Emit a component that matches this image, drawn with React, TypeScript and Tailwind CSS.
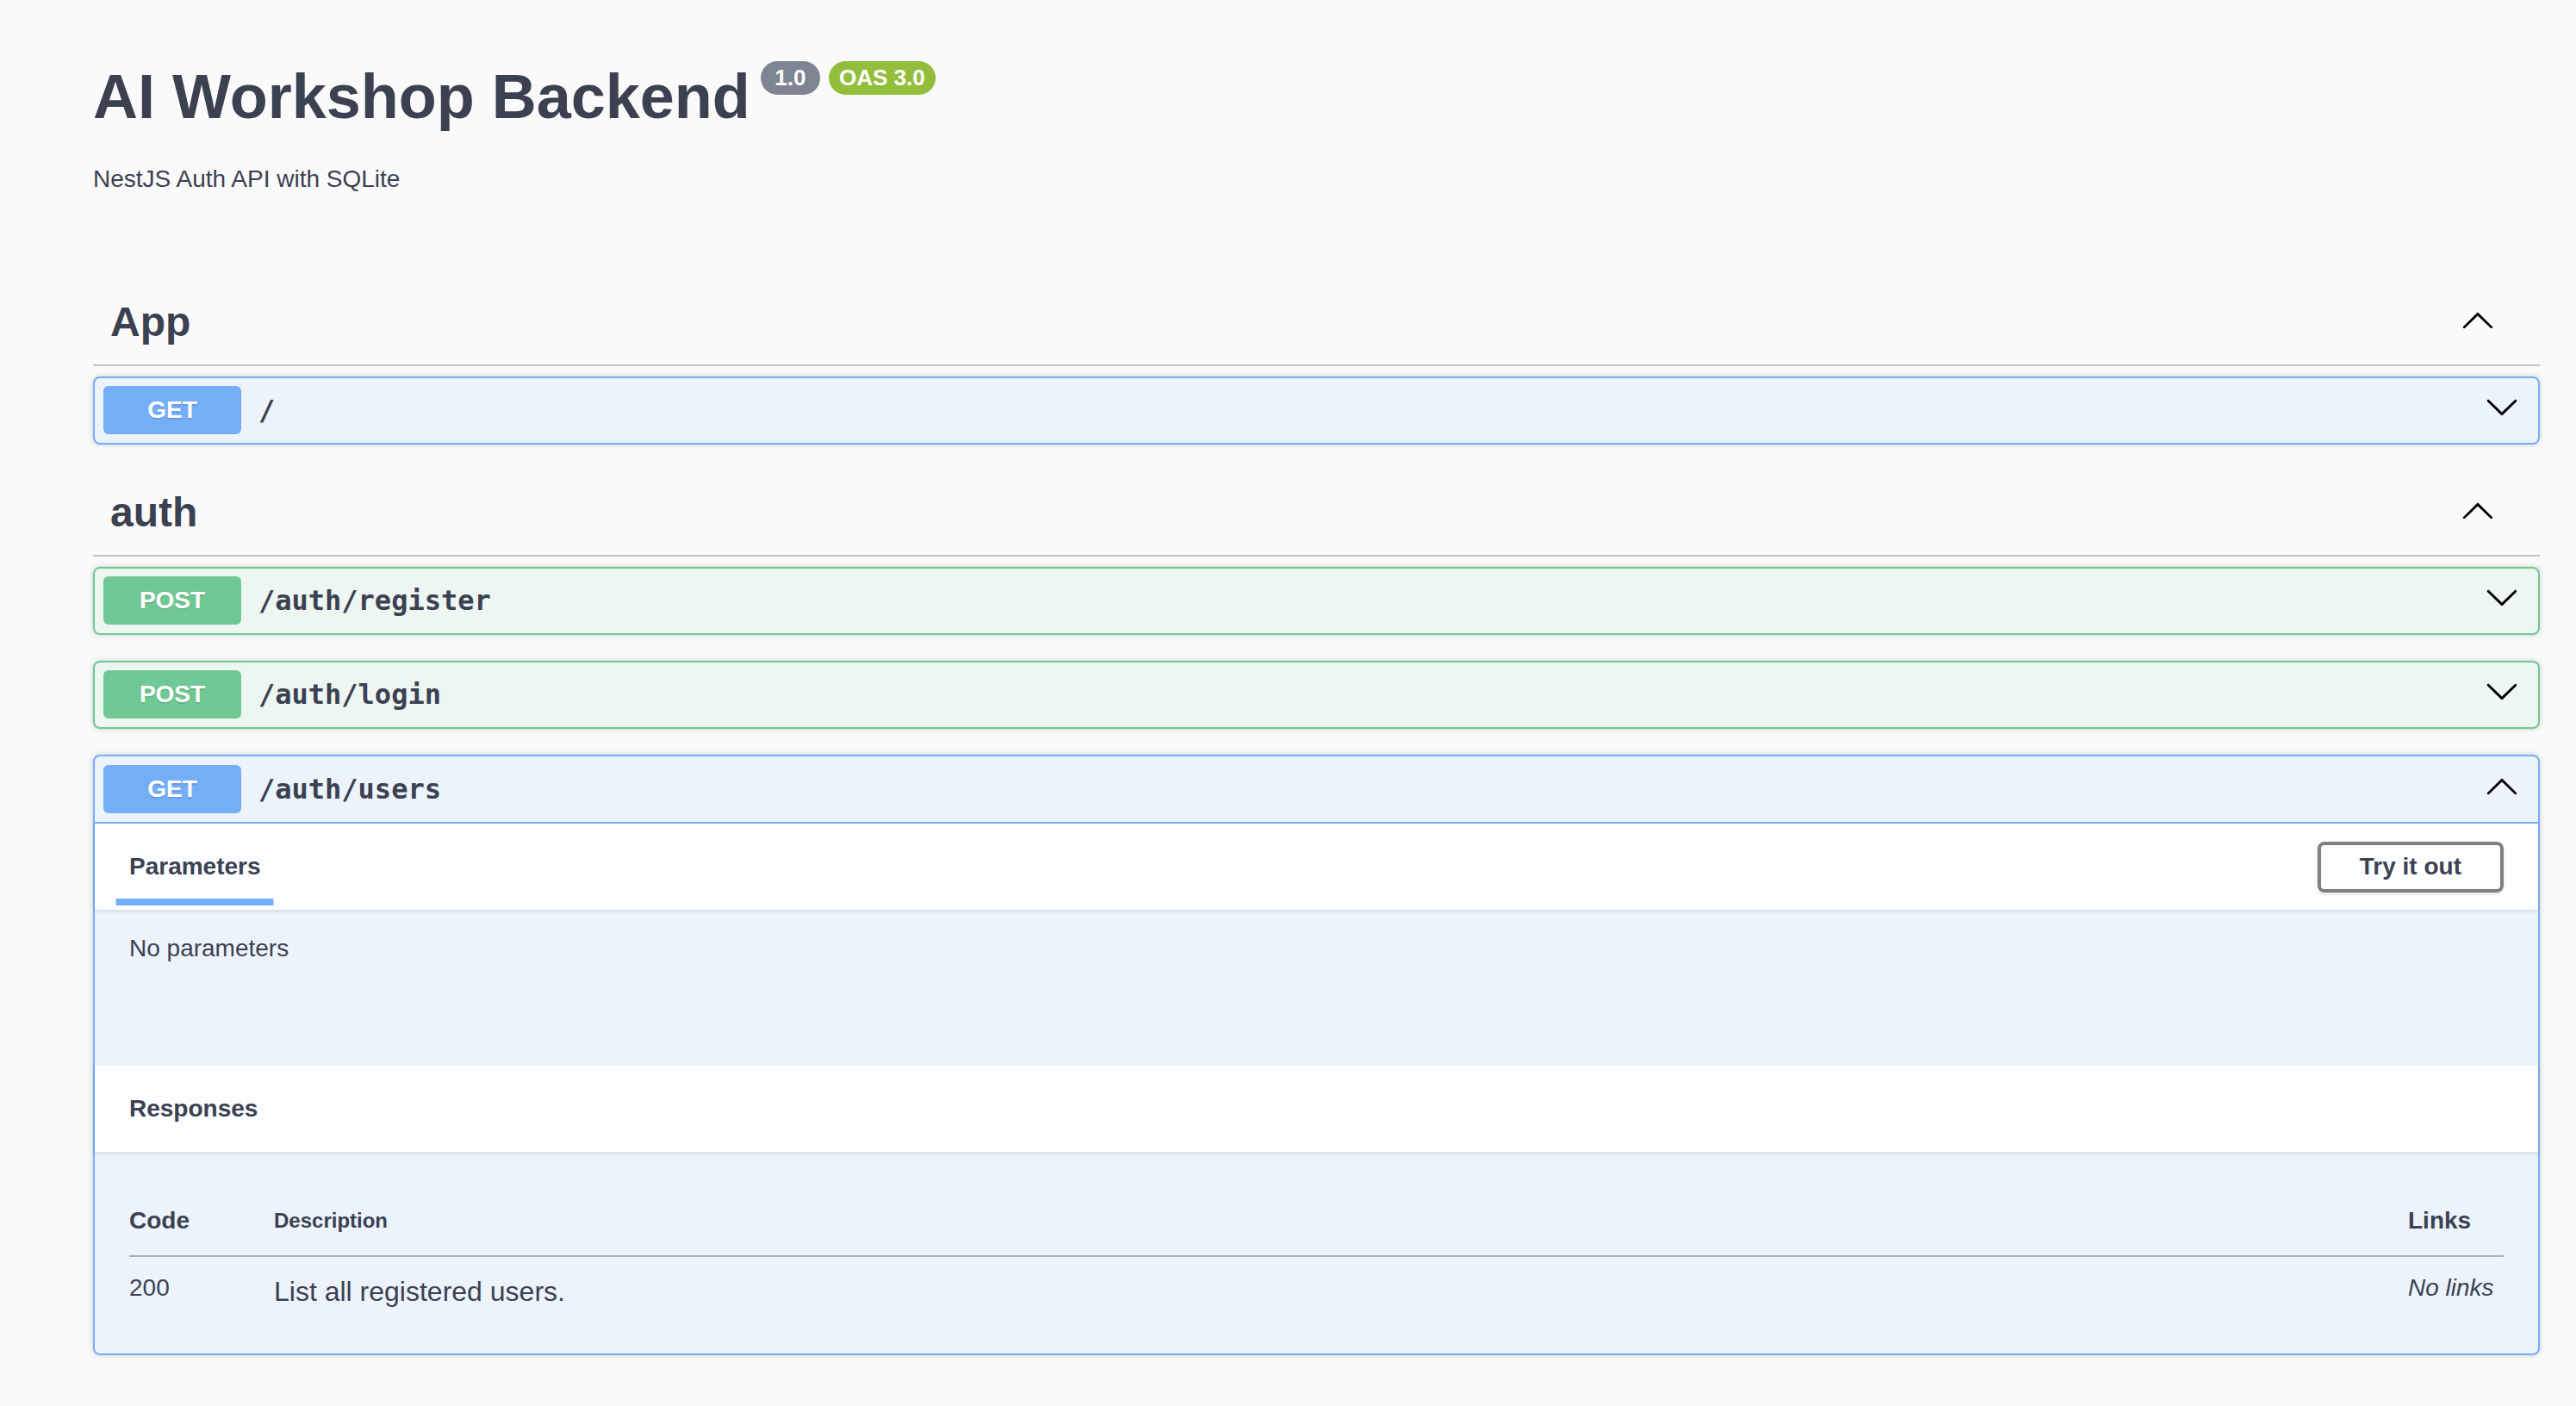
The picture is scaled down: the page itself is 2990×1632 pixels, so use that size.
import React from 'react';

const sans = '[font-family:"Liberation_Sans",Arial,sans-serif]';
const mono = '[font-family:"DejaVu_Sans_Mono",monospace]';

type Method = 'GET' | 'POST';

interface Operation {
  method: Method;
  path: string;
  open?: boolean;
}

interface Tag {
  name: string;
  operations: Operation[];
}

const tags: Tag[] = [
  { name: 'App', operations: [{ method: 'GET', path: '/' }] },
  {
    name: 'auth',
    operations: [
      { method: 'POST', path: '/auth/register' },
      { method: 'POST', path: '/auth/login' },
      { method: 'GET', path: '/auth/users', open: true },
    ],
  },
];

const methodStyles: Record<Method, { block: string; badge: string; line: string; tab: string }> = {
  GET: {
    block: 'border-[#74aef7] bg-[#ecf3fb]',
    badge: 'bg-[#74aef7]',
    line: 'border-[#74aef7]',
    tab: 'bg-[#74aef7]',
  },
  POST: {
    block: 'border-[#70c894] bg-[#edf6f1]',
    badge: 'bg-[#70c894]',
    line: 'border-[#70c894]',
    tab: 'bg-[#70c894]',
  },
};

function ArrowUp({ className }: { className?: string }) {
  return (
    <svg viewBox="0 0 20 20" className={className} fill="currentColor">
      <path d="M 17.418 14.908 C 17.69 15.176 18.127 15.176 18.397 14.908 C 18.667 14.64 18.668 14.207 18.397 13.939 L 10.489 6.109 C 10.219 5.841 9.782 5.841 9.51 6.109 L 1.602 13.939 C 1.332 14.207 1.332 14.64 1.602 14.908 C 1.873 15.176 2.311 15.176 2.581 14.908 L 10 7.767 L 17.418 14.908 Z" />
    </svg>
  );
}

function ArrowDown({ className }: { className?: string }) {
  return (
    <svg viewBox="0 0 20 20" className={className} fill="currentColor">
      <path d="M17.418 6.109c.272-.268.709-.268.979 0s.271.701 0 .969l-7.908 7.83c-.27.268-.707.268-.979 0l-7.908-7.830c-.27-.268-.27-.701 0-.969.271-.268.709-.268.979 0L10 13.25l7.418-7.141z" />
    </svg>
  );
}

function OpenBody({ method }: { method: Method }) {
  const s = methodStyles[method];
  return (
    <div>
      <div className="flex items-center justify-between h-[100px] px-[40px] bg-[#fcfdfe] shadow-[0_2px_4px_rgba(0,0,0,0.1)]">
        <div className="relative">
          <span className="text-[28px] leading-[32px] font-bold">Parameters</span>
          <span className={`absolute left-1/2 -translate-x-1/2 w-[120%] h-[8px] -bottom-[29px] ${s.tab}`} />
        </div>
        <button className="h-[59px] px-[45px] border-[4px] border-[#808080] rounded-[8px] text-[28px] leading-[32px] font-bold text-[#3b4151] shadow-[0_2px_4px_rgba(0,0,0,0.1)]">
          Try it out
        </button>
      </div>

      <div className="px-[40px] pt-[29px] pb-[120px]">
        <p className="text-[28px] leading-[32px]">No parameters</p>
      </div>

      <div className="flex items-center h-[100px] px-[40px] bg-[#fcfdfe] shadow-[0_2px_4px_rgba(0,0,0,0.1)]">
        <span className="text-[28px] leading-[32px] font-bold">Responses</span>
      </div>

      <div className="p-[40px]">
        <div className="flex py-[24px] border-b-2 border-[#abb0b8] font-bold">
          <div className="w-[168px] text-[28px] leading-[32px]">Code</div>
          <div className="flex-1 text-[24px] leading-[32px]">Description</div>
          <div className="w-[111px] text-[28px] leading-[32px]">Links</div>
        </div>
        <div className="flex pt-[20px] pb-[12px]">
          <div className="w-[168px] text-[28px] leading-[32px]">200</div>
          <div className="flex-1 text-[32px] leading-[40px]">List all registered users.</div>
          <div className="w-[111px] text-[28px] leading-[32px] italic">No links</div>
        </div>
      </div>
    </div>
  );
}

function OperationBlock({ op }: { op: Operation }) {
  const s = methodStyles[op.method];
  return (
    <div className={`mb-[30px] border-2 rounded-[8px] shadow-[0_0_6px_rgba(0,0,0,0.19)] ${s.block}`}>
      <div
        className={`flex items-center px-[10px] pb-[10px] ${op.open ? `pt-[10px] border-b-2 ${s.line}` : 'pt-[9px]'}`}
      >
        <span
          className={`w-[160px] h-[56px] rounded-[6px] flex items-center justify-center text-white text-[28px] font-bold [text-shadow:0_2px_0_rgba(0,0,0,0.1)] ${s.badge}`}
        >
          {op.method}
        </span>
        <span className={`flex-1 pl-[20px] text-[32px] font-bold ${mono}`}>{op.path}</span>
        {op.open ? (
          <ArrowUp className="w-[40px] h-[40px] mr-[12px] mb-[9px] text-black" />
        ) : (
          <ArrowDown className="w-[40px] h-[40px] mr-[12px] mb-[9px] text-black" />
        )}
      </div>
      {op.open && <OpenBody method={op.method} />}
    </div>
  );
}

function TagSection({ tag }: { tag: Tag }) {
  return (
    <div>
      <div className="flex items-center pl-[20px] pr-[52px] py-[20px] border-b-2 border-[#c2c4c8] mb-[12px]">
        <span className="flex-1 text-[48px] leading-[58px] font-bold">{tag.name}</span>
        <ArrowUp className="w-[40px] h-[40px] mb-[6px] text-black" />
      </div>
      {tag.operations.map(op => (
        <OperationBlock key={op.method + op.path} op={op} />
      ))}
    </div>
  );
}

export default function App() {
  return (
    <div className={`min-h-screen bg-[#fafafa] text-[#3b4151] ${sans}`}>
      <div className="pl-[108px] pr-[42px] pt-[69px] pb-[40px]">
        <div className="flex items-start">
          <h2 className="text-[72px] leading-[86px] font-bold">AI Workshop Backend</h2>
          <div className="flex gap-[10px] ml-[12px] mt-[2px]">
            <span className="w-[69px] h-[39px] rounded-full bg-[#7e8492] text-white text-[26px] leading-[39px] font-bold text-center">
              1.0
            </span>
            <span className="w-[124px] h-[39px] rounded-full bg-[#93be3c] text-white text-[26px] leading-[39px] font-bold text-center">
              OAS 3.0
            </span>
          </div>
        </div>
        <p className="mt-[36px] text-[28px] leading-[34px]">NestJS Auth API with SQLite</p>

        <div className="mt-[100px]">
          {tags.map(tag => (
            <TagSection key={tag.name} tag={tag} />
          ))}
        </div>
      </div>
    </div>
  );
}
